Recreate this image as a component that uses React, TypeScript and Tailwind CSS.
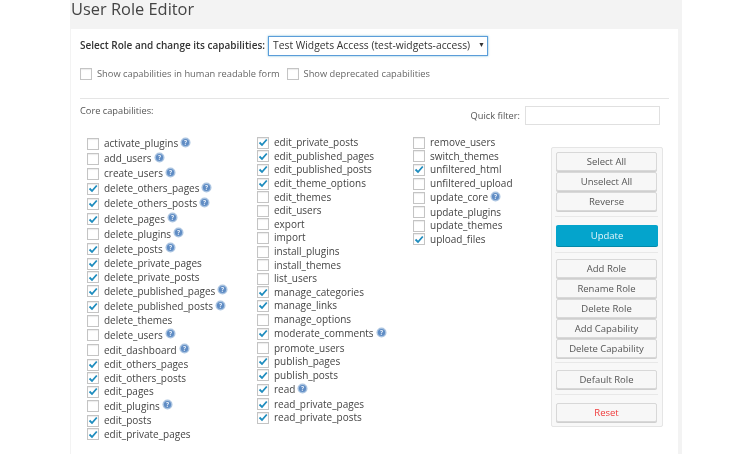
const col1: [string, boolean, boolean][] = [
  ["activate_plugins", false, true],
  ["add_users", false, true],
  ["create_users", false, true],
  ["delete_others_pages", true, true],
  ["delete_others_posts", true, true],
  ["delete_pages", true, true],
  ["delete_plugins", false, true],
  ["delete_posts", true, true],
  ["delete_private_pages", true, false],
  ["delete_private_posts", true, false],
  ["delete_published_pages", true, true],
  ["delete_published_posts", true, true],
  ["delete_themes", false, false],
  ["delete_users", false, true],
  ["edit_dashboard", false, true],
  ["edit_others_pages", true, false],
  ["edit_others_posts", true, false],
  ["edit_pages", true, false],
  ["edit_plugins", false, true],
  ["edit_posts", true, false],
  ["edit_private_pages", true, false],
];
const col2: [string, boolean, boolean][] = [
  ["edit_private_posts", true, false],
  ["edit_published_pages", true, false],
  ["edit_published_posts", true, false],
  ["edit_theme_options", true, false],
  ["edit_themes", false, false],
  ["edit_users", false, false],
  ["export", false, false],
  ["import", false, false],
  ["install_plugins", false, false],
  ["install_themes", false, false],
  ["list_users", false, false],
  ["manage_categories", true, false],
  ["manage_links", true, false],
  ["manage_options", false, false],
  ["moderate_comments", true, true],
  ["promote_users", false, false],
  ["publish_pages", true, false],
  ["publish_posts", true, false],
  ["read", true, true],
  ["read_private_pages", true, false],
  ["read_private_posts", true, false],
];
const col3: [string, boolean, boolean][] = [
  ["remove_users", false, false],
  ["switch_themes", false, false],
  ["unfiltered_html", true, false],
  ["unfiltered_upload", false, false],
  ["update_core", false, true],
  ["update_plugins", false, false],
  ["update_themes", false, false],
  ["upload_files", true, false],
];

function Box({ checked }: { checked: boolean }) {
  return (
    <span className="w-3 h-3 border border-[#c4c4c4] bg-white flex items-center justify-center shrink-0 shadow-[inset_0_1px_1px_rgba(0,0,0,0.08)]">
      {checked && (
        <svg width="10" height="9" viewBox="0 0 10 9" fill="none">
          <path d="M1.5 4.5 L4 7 L8.8 1.5" stroke="#1e8cbe" strokeWidth="1.8" />
        </svg>
      )}
    </span>
  );
}

function Help() {
  return (
    <svg width="11" height="11" viewBox="0 0 11 11" className="ml-[2px] -mt-[3px] shrink-0">
      <circle cx="5.5" cy="5.5" r="5" fill="#a9c3e0" />
      <circle cx="5.5" cy="5.5" r="3.6" fill="#5f8cc4" />
      <text x="5.5" y="7.8" textAnchor="middle" fontSize="6.5" fontWeight="700" fill="#e6eef8">?</text>
    </svg>
  );
}

function Cap({ row, gap }: { row: [string, boolean, boolean]; gap: string }) {
  const [name, checked, help] = row;
  return (
    <div className={help ? "flex items-center h-[15.1px]" : "flex items-center h-[13.6px]"}>
      <Box checked={checked} />
      <span className={gap + " whitespace-nowrap"}>{name}</span>
      {help && <Help />}
    </div>
  );
}

function Btn({ label, red }: { label: string; red?: boolean }) {
  return (
    <div
      className={
        "h-[19px] w-[101px] pt-[2px] flex items-center justify-center border border-[#d8d8d8] bg-[#f7f7f7] rounded-[2px] shadow-[0_1px_0_#cfcfcf] text-[9.5px] " +
        (red ? "text-[#f03a3a]" : "text-[#555]")
      }
    >
      {label}
    </div>
  );
}

function Sep() {
  return <div className="h-px bg-[#e8e8e8] w-[103px] -ml-px" />;
}

export default function App() {
  return (
    <div className="w-[749px] h-[454px] bg-white overflow-hidden font-['Open_Sans',sans-serif] text-[#444] text-[10px] blur-[0.35px]">
      <div className="ml-[70px] w-[612px] h-[454px] bg-[#f3f3f3] flex flex-col">
        <h1 className="h-[29px] text-[16.4px] leading-[17px] text-[#444] pl-px">User Role Editor</h1>
        <div className="w-[607px] flex-1 ml-px bg-white pl-[9px] flex flex-col">
          <div className="flex items-center h-[19px] mt-[7px]">
            <span className="font-semibold text-[#333] whitespace-nowrap">Select Role and change its capabilities:</span>
            <div className="ml-[3px] w-[220px] h-[20px] border border-[#5b9dd9] shadow-[0_0_2px_rgba(30,140,190,0.6)] flex items-center pl-[4px] pr-[2px] justify-between text-[#333] font-medium text-[10.3px]">
              <span className="whitespace-nowrap">Test Widgets Access (test-widgets-access)</span>
              <span className="text-[7px]">▼</span>
            </div>
          </div>
          <div className="flex items-center mt-[12px] h-[14px] text-[#666] text-[9.3px]">
            <Box checked={false} />
            <span className="ml-[5px] whitespace-nowrap">Show capabilities in human readable form</span>
            <span className="ml-[7px]"><Box checked={false} /></span>
            <span className="ml-[5px] whitespace-nowrap">Show deprecated capabilities</span>
          </div>
          <div className="h-px w-[589px] bg-[#e5e5e5] mt-[17px]" />
          <div className="flex w-[580px] mt-[6px] h-[20px]">
            <span className="text-[9.25px] leading-[11px] text-[#555]">Core capabilities:</span>
            <div className="ml-auto flex items-center">
              <span className="text-[9.25px] text-[#555] mr-[5px] mt-[1px]">Quick filter:</span>
              <div className="w-[135px] h-[19px] border border-[#e0e0e0] bg-white" />
            </div>
          </div>
          <div className="flex mt-[11px] items-start">
            <div className="ml-[7px] w-[170px] flex flex-col">
              {col1.map((r) => <Cap key={r[0]} row={r} gap="ml-[5px]" />)}
            </div>
            <div className="w-[156px] flex flex-col">
              {col2.map((r) => <Cap key={r[0]} row={r} gap="ml-[5px]" />)}
            </div>
            <div className="w-[138px] flex flex-col">
              {col3.map((r) => <Cap key={r[0]} row={r} gap="ml-[5px]" />)}
            </div>
            <div className="w-[112px] h-[280px] mt-[11px] border border-[#e5e5e5] rounded-[2px] bg-[#f8f8f8] flex flex-col pl-[4px] pt-[4px]">
              <div className="flex flex-col gap-px">
                <Btn label="Select All" />
                <Btn label="Unselect All" />
                <Btn label="Reverse" />
              </div>
              <div className="mt-[5px]"><Sep /></div>
              <div className="mt-[8px] h-[21px] w-[102px] pt-[2px] flex items-center justify-center rounded-[2px] bg-[#04a4cc] shadow-[0_1px_0_#0388a8] text-[9.5px] text-[#e6f6fa]">Update</div>
              <div className="mt-[6px]"><Sep /></div>
              <div className="mt-[6px] flex flex-col gap-px">
                <Btn label="Add Role" />
                <Btn label="Rename Role" />
                <Btn label="Delete Role" />
                <Btn label="Add Capability" />
                <Btn label="Delete Capability" />
              </div>
              <div className="mt-[4px]"><Sep /></div>
              <div className="mt-[7px]"><Btn label="Default Role" /></div>
              <div className="mt-[5px]"><Sep /></div>
              <div className="mt-[8px]"><Btn label="Reset" red /></div>
            </div>
          </div>
        </div>
      </div>
    </div>
  );
}
